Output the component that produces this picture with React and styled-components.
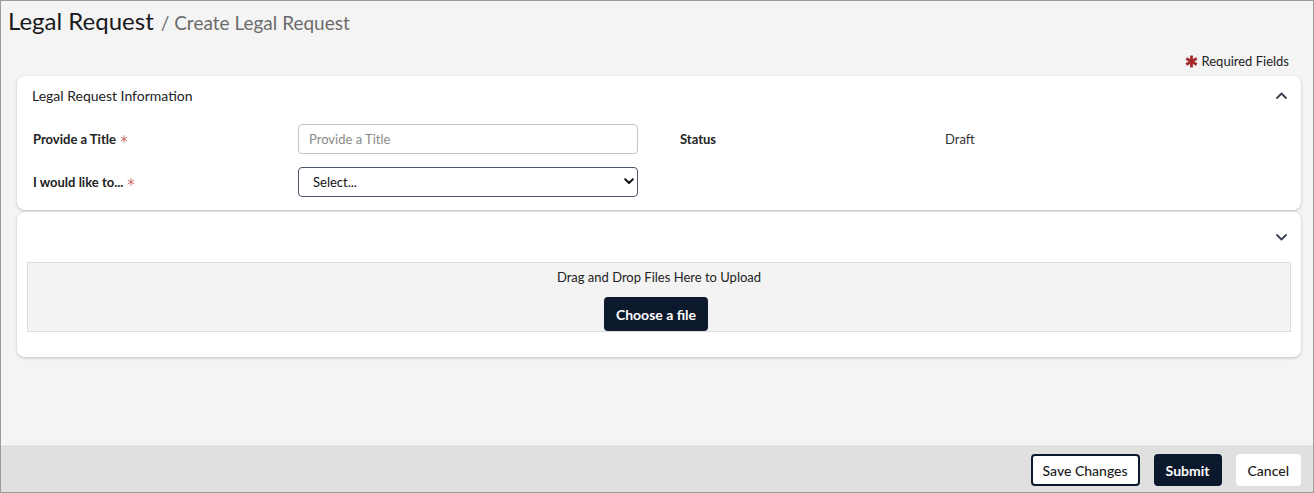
import React from "react";
import styled, { createGlobalStyle } from "styled-components";

const GlobalStyle = createGlobalStyle`
  html, body { margin: 0; padding: 0; }
  body {
    font-family: Lato, "Open Sans", "Liberation Sans", sans-serif;
    color: #222;
    background: #f4f4f4;
  }
  * { box-sizing: border-box; }
`;

const Frame = styled.div`
  width: 1314px;
  height: 493px;
  border: 1px solid #9c9c9c;
  background: #f4f4f4;
  display: flex;
  flex-direction: column;
`;

const Content = styled.main`
  flex: 1;
  padding: 0 12px 0 16px;
  display: flex;
  flex-direction: column;
`;

const Header = styled.header`
  padding: 6px 0 0 7px;
  margin-left: -16px;
  line-height: 28px;
  display: flex;
  align-items: baseline;
  gap: 7px;
`;

const Title = styled.h1`
  margin: 0;
  font-size: 24px;
  font-weight: 400;
  color: #1b1b1b;
`;

const Crumb = styled.span`
  font-size: 19px;
  color: #6b6b6b;
`;

const RequiredNote = styled.div`
  margin-top: 14px;
  margin-right: 12px;
  height: 20px;
  display: flex;
  align-items: center;
  justify-content: flex-end;
  gap: 4px;
  font-size: 13px;
  color: #222;
`;

const Card = styled.section`
  background: #fff;
  border-radius: 8px;
  box-shadow: 0 1px 3px rgba(0, 0, 0, 0.22);
  margin-top: ${(p) => p.$gap || 0}px;
`;

const CardHeader = styled.div`
  height: ${(p) => p.$h}px;
  padding: 0 14px 0 15px;
  display: flex;
  align-items: center;
  justify-content: space-between;
  font-size: 14px;
  color: #222;
`;

const FieldGrid = styled.div`
  padding: 9px 16px 13px 16px;
  display: grid;
  grid-template-columns: 265px 382px 265px 1fr;
  row-gap: 13px;
  align-items: center;
`;

const Label = styled.div`
  font-size: 13px;
  font-weight: 700;
  color: #222;
  display: flex;
  align-items: center;
  gap: 4px;
`;

const Value = styled.div`
  font-size: 13px;
  color: #333;
`;

const TextInput = styled.input`
  width: 340px;
  height: 30px;
  border: 1px solid #c4c4c4;
  border-radius: 4px;
  padding: 0 10px;
  font-family: inherit;
  font-size: 13px;
  color: #222;
  outline: none;
  &::placeholder { color: #8a8a8a; }
`;

const SelectWrap = styled.div`
  position: relative;
  width: 340px;
  height: 30px;
`;

const Select = styled.select`
  appearance: none;
  width: 100%;
  height: 100%;
  border: 1px solid #4a5568;
  border-radius: 4px;
  padding: 0 10px 0 14px;
  font-family: inherit;
  font-size: 13px;
  color: #111;
  background: #fff;
  outline: none;
`;

const SelectArrow = styled.svg`
  position: absolute;
  right: 4px;
  top: 11px;
  pointer-events: none;
`;

const UploadBody = styled.div`
  padding: 0 10px 25px 10px;
`;

const DropZone = styled.div`
  background: #f3f3f3;
  border: 1px solid #dcdcdc;
  padding-top: 5px;
  display: flex;
  flex-direction: column;
  align-items: center;
`;

const DropText = styled.div`
  font-size: 13px;
  line-height: 18px;
  color: #222;
  margin-bottom: 11px;
`;

const Button = styled.button`
  height: ${(p) => p.$h || 32}px;
  padding: 0 ${(p) => p.$px || 10}px;
  margin-right: ${(p) => p.$shift || 0}px;
  border-radius: 4px;
  font-family: inherit;
  font-size: 14px;
  font-weight: ${(p) => (p.$variant === "primary" ? 700 : 500)};
  cursor: pointer;
  border: 2px solid
    ${(p) =>
      p.$variant === "primary" || p.$variant === "outline" ? "#0c192c" : "#fff"};
  background: ${(p) => (p.$variant === "primary" ? "#0c192c" : "#fff")};
  color: ${(p) => (p.$variant === "primary" ? "#fff" : "#1b1b1b")};
`;

const Footer = styled.footer`
  height: 48px;
  background: #e0e0e0;
  border-top: 1px solid #fbfbfb;
  display: flex;
  align-items: center;
  justify-content: flex-end;
  padding: 3px 12px 0 0;
  gap: 14px;
`;

const Chevron = ({ up }) => (
  <svg width="11" height="7" viewBox="0 0 11 7">
    <polyline
      points={up ? "1,6 5.5,1.5 10,6" : "1,1 5.5,5.5 10,1"}
      fill="none"
      stroke="#3a4352"
      strokeWidth="1.8"
      strokeLinecap="round"
      strokeLinejoin="round"
    />
  </svg>
);

const Asterisk = ({ size, color, weight }) => (
  <svg width={size} height={size} viewBox="0 0 12 12">
    <g stroke={color} strokeWidth={weight} strokeLinecap="butt">
      <line x1="6" y1="0.5" x2="6" y2="11.5" />
      <line x1="1.2" y1="3.2" x2="10.8" y2="8.8" />
      <line x1="1.2" y1="8.8" x2="10.8" y2="3.2" />
    </g>
  </svg>
);

export default function App() {
  return (
    <>
      <GlobalStyle />
      <Frame>
        <Content>
          <Header>
            <Title>Legal Request</Title>
            <Crumb>/ Create Legal Request</Crumb>
          </Header>

          <RequiredNote>
            <Asterisk size={13} color="#a52a2e" weight={2.6} />
            Required Fields
          </RequiredNote>

          <Card $gap={5}>
            <CardHeader $h={39}>
              Legal Request Information
              <Chevron up />
            </CardHeader>
            <FieldGrid>
              <Label>
                Provide a Title <Asterisk size={8} color="#c0504d" weight={1.2} />
              </Label>
              <div>
                <TextInput placeholder="Provide a Title" />
              </div>
              <Label>Status</Label>
              <Value>Draft</Value>

              <Label>
                I would like to... <Asterisk size={8} color="#c0504d" weight={1.2} />
              </Label>
              <SelectWrap>
                <Select defaultValue="">
                  <option value="">Select...</option>
                </Select>
                <SelectArrow width="10" height="7" viewBox="0 0 10 7">
                  <polyline
                    points="1.2,1.2 5,5 8.8,1.2"
                    fill="none"
                    stroke="#111"
                    strokeWidth="2"
                    strokeLinecap="round"
                    strokeLinejoin="round"
                  />
                </SelectArrow>
              </SelectWrap>
              <div />
              <div />
            </FieldGrid>
          </Card>

          <Card $gap={2}>
            <CardHeader $h={50}>
              <span />
              <Chevron />
            </CardHeader>
            <UploadBody>
              <DropZone>
                <DropText>Drag and Drop Files Here to Upload</DropText>
                <Button $variant="primary" $h={34} $px={10} $shift={6}>
                  Choose a file
                </Button>
              </DropZone>
            </UploadBody>
          </Card>
        </Content>

        <Footer>
          <Button $variant="outline">Save Changes</Button>
          <Button $variant="primary">Submit</Button>
          <Button $variant="plain">Cancel</Button>
        </Footer>
      </Frame>
    </>
  );
}
